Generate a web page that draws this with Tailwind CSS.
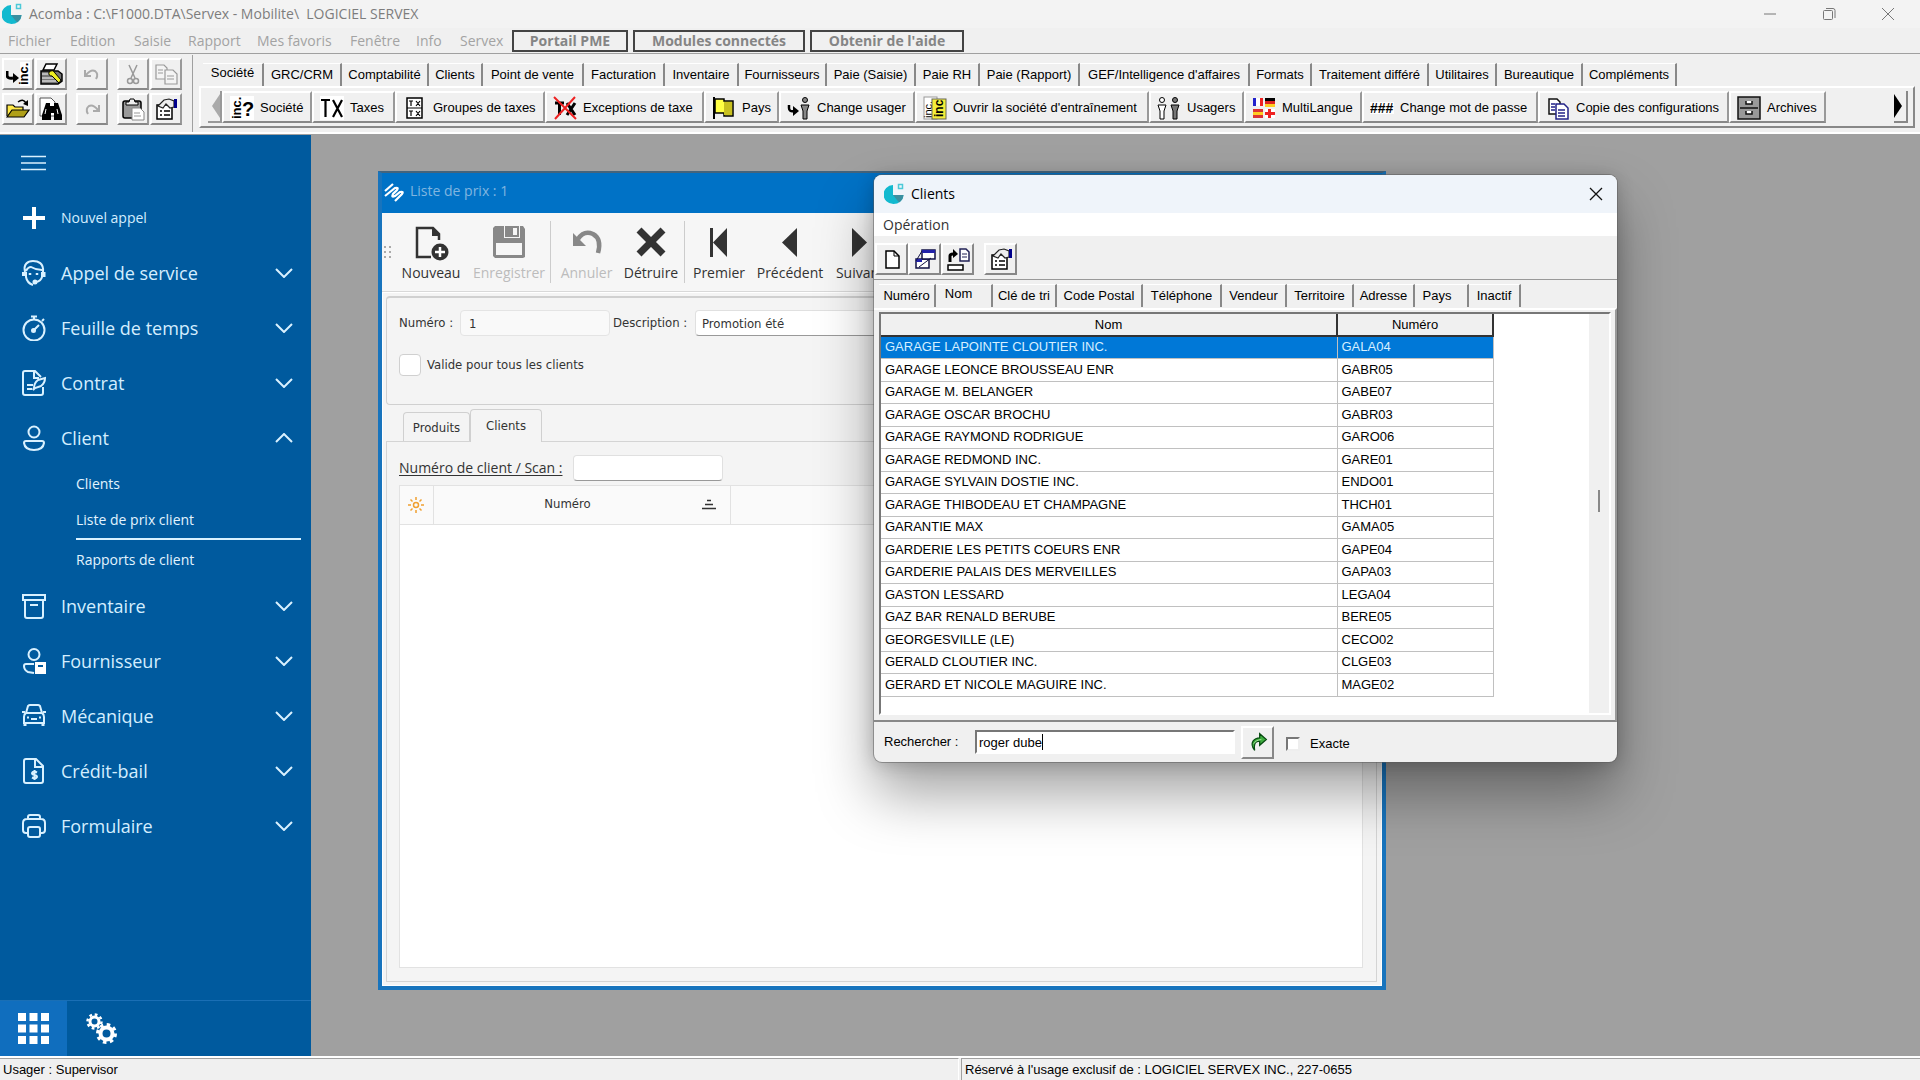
<!DOCTYPE html>
<html lang="fr">
<head>
<meta charset="utf-8">
<title>Acomba</title>
<script src="https://cdn.jsdelivr.net/npm/@tailwindcss/browser@4"></script>
</head>
<body class="flex h-screen flex-col overflow-hidden bg-[#f0f0f0] font-['Liberation_Sans',sans-serif] text-[13px] leading-4 whitespace-nowrap text-black">
<svg class="hidden">
  <symbol id="logo" viewBox="0 0 20 22"><path d="M9 2v10h10.500A10 9.500 0 1 1 9 2z" fill="#12b9cf"/><path d="M9 12h10.500A10 9.500 0 0 1 15 19.500z" fill="#3a8fa0"/><rect x="14.500" y="1.500" width="4" height="4" fill="none" stroke="#4cc9d8" stroke-width="1.500"/></symbol>
  <symbol id="down" viewBox="0 0 18 10"><path d="M1 1l8 8 8-8" fill="none" stroke="#d9f1ff" stroke-width="2"/></symbol>
  <symbol id="props" viewBox="0 0 24 24"><path d="M3 8h15v14H3z" fill="#fff" stroke="#000" stroke-width="1.500"/><path d="M6 14h2M10 14h6M6 18h2M10 18h6" stroke="#000" stroke-width="1.500"/><path d="M4 9l6-6 5-1 5 2v6l-4 1-4-4-3 4z" fill="#eee" stroke="#222" stroke-width="1.200"/><path d="M20 2h3v9h-3z" fill="#00008b"/></symbol>
</svg>

<header>
  <div class="flex h-7 items-center bg-[#f3f3f3] font-['Open_Sans',sans-serif] text-sm text-[#7d7d7d]">
    <svg class="ml-0.5 h-[22px] w-5"><use href="#logo"/></svg>
    <h1 class="ml-[7px] whitespace-pre">Acomba : C:\F1000.DTA\Servex - Mobilite\  LOGICIEL SERVEX</h1>
    <div class="ml-auto flex items-center gap-[45px] pr-[25px]">
      <button aria-label="Réduire"><svg class="h-3.5 w-3.5" viewBox="0 0 14 14"><path d="M1 7h12" stroke="#777"/></svg></button>
      <button aria-label="Restaurer"><svg class="h-3.5 w-3.5" viewBox="0 0 14 14" fill="none" stroke="#777"><rect x="1.500" y="3.500" width="9" height="9" rx="1"/><path d="M4 1.500h7a2 2 0 0 1 2 2V11"/></svg></button>
      <button aria-label="Fermer"><svg class="h-3.5 w-3.5" viewBox="0 0 14 14"><path d="M1 1l12 12M13 1L1 13" stroke="#777"/></svg></button>
    </div>
  </div>
  <nav class="flex h-[26px] items-center border-b border-[#a0a0a0] pl-2 font-['Open_Sans',sans-serif] text-sm text-[#a3a3a3]">
    <button class="w-[62px] text-left">Fichier</button><button class="w-16 text-left">Edition</button><button class="w-[54px] text-left">Saisie</button><button class="w-[69px] text-left">Rapport</button><button class="w-[93px] text-left">Mes favoris</button><button class="w-[66px] text-left">Fenêtre</button><button class="w-11 text-left">Info</button><button class="w-[52px] text-left">Servex</button>
    <div class="flex gap-[5px] font-bold text-[#858585] *:h-[22px] *:border-2 *:border-[#444] *:leading-[18px]">
      <button class="w-[116px]">Portail PME</button><button class="w-[172px]">Modules connectés</button><button class="w-[154px]">Obtenir de l'aide</button>
    </div>
  </nav>
  <div class="flex h-[80px] border-b-2 border-white pt-px">
    <div class="flex gap-[9px] border-r border-[#a0a0a0] pt-[3px] pr-2.5 pl-0.5">
      <div class="grid h-[67px] grid-cols-2 gap-x-px gap-y-0.5 *:flex *:h-8 *:w-8 *:items-center *:justify-center *:border-2 *:border-t-white *:border-r-[#999] *:border-b-[#888] *:border-l-white">
        <button aria-label="Société"><svg class="h-6 w-6" viewBox="0 0 24 24"><rect x="14" width="10" height="24" fill="#fff"/><path d="M1 9v4q0 4 6 3" fill="none" stroke="#000" stroke-width="3"/><path d="M7 11l6 5-6 5z"/><text transform="translate(22 23) rotate(-90)" font-size="13" font-weight="bold">inc.</text></svg></button>
        <button aria-label="Configurer l'impression"><svg class="h-6 w-6" viewBox="0 0 24 24"><path d="M7 2h11l-3 6H4z" fill="#fff" stroke="#000" stroke-width="1.500"/><path d="M2 9h17l4 3v7l-4 3H2z" fill="#777" stroke="#000" stroke-width="1.500"/><path d="M3 12h14M3 16h14M3 19h14" stroke="#fff"/><path d="M10 10q4-3 6 1l6 7-2 3-7-7q-4 0-3-4z" fill="#ee2" stroke="#000"/></svg></button>
        <button aria-label="Ouvrir"><svg class="h-6 w-6" viewBox="0 0 24 24"><path d="M1 19V8h6l2 2h8v4" fill="#ffe94a" stroke="#000" stroke-width="1.200"/><path d="M1 20l5-7h17l-5 7z" fill="#b0a018" stroke="#000" stroke-width="1.200"/><path d="M12 5q5-4 8 1" fill="none" stroke="#000" stroke-width="1.500"/><path d="M22 3v6l-5-2z"/></svg></button>
        <button aria-label="Rechercher"><svg class="h-6 w-6" viewBox="0 0 24 24"><path d="M1 1h11l4 4v14H1z" fill="#fff" stroke="#555"/><path d="M7 6h4v3h4V6h4l4 12v5h-8v-7h-3v7H3v-5z"/><path d="M7 12l-1 5M18 12l1 5" stroke="#fff"/></svg></button>
      </div>
      <div class="grid h-[67px] gap-y-0.5 *:flex *:h-8 *:w-8 *:items-center *:justify-center *:border-2 *:border-t-white *:border-r-[#999] *:border-b-[#888] *:border-l-white">
        <button aria-label="Annuler"><svg class="h-6 w-6" viewBox="0 0 24 24" fill="none" stroke="#aaa" stroke-width="2"><path d="M5 8v6h6M6 13q5-6 9-4 4 3 1 8"/></svg></button>
        <button aria-label="Rétablir"><svg class="h-6 w-6" viewBox="0 0 24 24" fill="none" stroke="#aaa" stroke-width="2"><path d="M19 8v6h-6M18 13q-5-6-9-4-4 3-1 8"/></svg></button>
      </div>
      <div class="grid h-[67px] grid-cols-2 gap-x-px gap-y-0.5 *:flex *:h-8 *:w-8 *:items-center *:justify-center *:border-2 *:border-t-white *:border-r-[#999] *:border-b-[#888] *:border-l-white">
        <button aria-label="Couper"><svg class="h-6 w-6" viewBox="0 0 24 24" fill="none" stroke="#999" stroke-width="1.500"><path d="M8 3l6 13M16 3l-6 13"/><circle cx="9" cy="19" r="2.500"/><circle cx="15" cy="19" r="2.500"/></svg></button>
        <button aria-label="Copier"><svg class="h-6 w-6" viewBox="0 0 24 24" fill="#f4f4f4" stroke="#999" stroke-width="1.200"><path d="M2 3h8l3 3v11H2z"/><path d="M11 8h8l4 4v10H11z"/><path d="M4 8h5M4 11h5M13 14h7M13 17h7"/></svg></button>
        <button aria-label="Coller"><svg class="h-6 w-6" viewBox="0 0 24 24"><rect x="2" y="4" width="18" height="17" rx="2" fill="#999" stroke="#000" stroke-width="1.500"/><path d="M5 8h12V5h-3l-1-3H9L8 5H5z" fill="#eee" stroke="#000"/><path d="M11 11h8l4 4v8H11z" fill="#fff" stroke="#888"/><path d="M13 16h6M13 19h7" stroke="#999"/></svg></button>
        <button aria-label="Propriétés"><svg class="h-6 w-6"><use href="#props"/></svg></button>
      </div>
    </div>
    <div class="min-w-0 flex-1 pr-[5px] pl-1.5">
      <div class="flex h-[31px] items-end pt-1 pl-1 *:h-[23px] *:shrink-0 *:border-r-2 *:border-r-[#888] *:border-t *:border-t-white">
        <button class="w-[61px] pb-1">Société</button><button class="w-[78px]">GRC/CRM</button><button class="w-[87px]">Comptabilité</button><button class="w-[54px]">Clients</button><button class="w-[101px]">Point de vente</button><button class="w-[81px]">Facturation</button><button class="w-[74px]">Inventaire</button><button class="w-[88px]">Fournisseurs</button><button class="w-[89px]">Paie (Saisie)</button><button class="w-16">Paie RH</button><button class="w-[100px]">Paie (Rapport)</button><button class="w-[170px]">GEF/Intelligence d'affaires</button><button class="w-[62px]">Formats</button><button class="w-[117px]">Traitement différé</button><button class="w-[68px]">Utilitaires</button><button class="w-[86px]">Bureautique</button><button class="w-[94px]">Compléments</button>
      </div>
      <div class="flex h-[42px] items-center border-2 border-t-white border-r-[#888] border-b-[#888] border-l-white pl-[7px]">
        <button aria-label="Précédent" class="flex h-8 w-3.5 items-center justify-end border-r-2 border-b-2 border-[#999]"><svg class="h-6 w-2" viewBox="0 0 8 24"><path d="M8 0v24L0 12z" fill="#aaa"/></svg></button>
        <div class="flex *:flex *:h-8 *:shrink-0 *:items-center *:gap-1.5 *:border-2 *:border-t-white *:border-r-[#999] *:border-b-[#888] *:border-l-white *:pt-0.5 *:pl-1.5 [&_svg]:h-6 [&_svg]:w-6 [&_svg]:shrink-0">
          <button class="w-[90px]"><svg viewBox="0 0 24 24"><rect width="24" height="24" fill="#fff"/><text transform="translate(11 23) rotate(-90)" font-size="13" font-weight="bold">inc.</text><text x="12" y="20" font-size="20" font-weight="bold">?</text></svg>Société</button>
          <button class="w-[83px]"><svg viewBox="0 0 24 24"><rect width="24" height="24" fill="#fff"/><path d="M1 4h9M5.500 4v17M13 4l9 17M22 4l-9 17" stroke="#000" stroke-width="2.200"/></svg>Taxes</button>
          <button class="w-[150px]"><svg viewBox="0 0 24 24"><rect x="4" y="2" width="15" height="20" fill="#fff" stroke="#000" stroke-width="1.500"/><path d="M4 12h15M6 5h4M8 5v5M13 5l4 5M17 5l-4 5M6 15h4M8 15v5M13 15l4 5M17 15l-4 5" stroke="#000" stroke-width="1.200"/></svg>Groupes de taxes</button>
          <button class="w-[159px]"><svg viewBox="0 0 24 24"><path d="M2 7h9M6.500 7v12M14 7l8 12M22 7l-8 12" stroke="#000" stroke-width="3"/><path d="M1 1l22 22M22 1L2 23" stroke="#e22" stroke-width="2"/></svg>Exceptions de taxe</button>
          <button class="w-[75px]"><svg viewBox="0 0 24 24"><path d="M2 1v22" stroke="#000" stroke-width="2"/><path d="M3 3h9v2h9v15h-9v-3H3z" fill="#ff4" stroke="#000" stroke-width="1.500"/><path d="M12 6h8v13h-8z" fill="#c8c020"/></svg>Pays</button>
          <button class="w-[136px]"><svg viewBox="0 0 24 24"><path d="M2 9v3q0 4 5 3" fill="none" stroke="#000" stroke-width="2.500"/><path d="M6 10l6 5-6 5z"/><circle cx="18" cy="4" r="2.500" fill="#888" stroke="#000"/><path d="M14 9h8l-2 6v8h-4v-8z" fill="#888" stroke="#000"/></svg>Change usager</button>
          <button class="w-[234px]"><svg viewBox="0 0 24 24"><rect x="1" y="1" width="13" height="22" fill="#fff" stroke="#999"/><text transform="translate(9 22) rotate(-90)" font-size="11">inc.</text><rect x="9" y="3" width="14" height="20" fill="#f5ee3a" stroke="#665"/><text transform="translate(20 21) rotate(-90)" font-size="12" font-weight="bold">inc</text></svg>Ouvrir la société d'entraînement</button>
          <button class="w-[95px]"><svg viewBox="0 0 24 24" stroke="#000"><circle cx="5" cy="4" r="2.500" fill="#fff"/><path d="M1 9h8l-2 6v8H3v-8z" fill="#fff"/><circle cx="18" cy="4" r="2.500" fill="#777"/><path d="M14 9h8l-2 6v8h-4v-8z" fill="#777"/></svg>Usagers</button>
          <button class="w-[118px]"><svg viewBox="0 0 24 24"><path d="M1 2h3v8H1z" fill="#22c"/><path d="M4 2h4v8H4z" fill="#fff"/><path d="M8 2h3v8H8z" fill="#e22"/><path d="M13 2h10v3H13z"/><path d="M13 5h10v3H13z" fill="#d22"/><path d="M13 8h10v3H13z" fill="#fc2"/><path d="M1 13h10v3H1zM1 19h10v3H1z" fill="#d33"/><path d="M1 16h10v3H1z" fill="#fc2"/><path d="M13 13h10v9H13z" fill="#fff"/><path d="M16 13h3v3h4v3h-4v3h-3v-3h-3v-3h3z" fill="#e22"/></svg>MultiLangue</button>
          <button class="w-[176px]"><svg viewBox="0 0 24 24"><rect y="6" width="24" height="12" fill="#fff"/><text x="0" y="17" font-size="14" font-weight="bold">###</text></svg>Change mot de passe</button>
          <button class="w-[191px]"><svg viewBox="0 0 24 24" fill="#fff" stroke="#111" stroke-width="1.500"><path d="M3 3h8l3 3v12H3z"/><path d="M10 8h8l4 4v11H10z" stroke="#228"/><path d="M5 8h4M5 11h4M5 14h4M12 14h7M12 17h7M12 20h7" stroke="#228"/></svg>Copie des configurations</button>
          <button class="w-[97px]"><svg viewBox="0 0 24 24"><rect x="1" y="1" width="22" height="22" fill="#999" stroke="#111" stroke-width="1.500"/><path d="M3 12h18" stroke="#111" stroke-width="1.500"/><path d="M9 5v3h6V5M9 15v3h6v-3" fill="#fff" stroke="#111" stroke-width="1.500"/></svg>Archives</button>
        </div>
        <button aria-label="Suivant" class="mr-[5px] ml-auto flex h-8 w-3.5 items-center border-r-2 border-b-2 border-[#888]"><svg class="h-6 w-2" viewBox="0 0 8 24"><path d="M0 0v24l8-12z"/></svg></button>
      </div>
    </div>
  </div>
</header>

<div class="flex min-h-0 flex-1 border-t border-[#a0a0a0]">
  <aside class="flex w-[311px] flex-col bg-[#005a9e] font-['Open_Sans',sans-serif] text-lg text-[#d4eeff]">
    <button aria-label="Menu" class="flex h-[55px] items-center pl-[21px]"><svg class="h-4 w-[25px]" viewBox="0 0 25 16"><path d="M0 1.500h25M0 8h25M0 14.500h25" stroke="#d9f1ff" stroke-width="1.500"/></svg></button>
    <nav class="flex flex-col [&>button]:flex [&>button]:h-[55px] [&>button]:items-center [&>button]:gap-[15px] [&>button]:pl-[22px] [&>button]:pr-[18px]">
      <button class="text-sm"><svg class="h-6 w-6" viewBox="0 0 24 24"><path d="M1 12h22M12 1v22" stroke="#fff" stroke-width="4"/></svg>Nouvel appel</button>
      <button><svg class="h-[26px] w-6" viewBox="0 0 24 26" fill="none" stroke="#d9f1ff" stroke-width="2"><path d="M3 12C1 4 6 1 11 1s11 2 10 11M4 11q2-4 5-4 5 3 11 3M4 12v5q1 6 7 8M20 12v5q-1 4-6 5"/><path d="M1.500 12v4M22 12v5" stroke-width="3"/><path d="M8 13v2M15 13v2" stroke-width="2.500"/><circle cx="13" cy="22" r="1.500" fill="#d9f1ff"/></svg>Appel de service<svg class="ml-auto h-2.5 w-[18px]"><use href="#down"/></svg></button>
      <button><svg class="h-[26px] w-6" viewBox="0 0 24 26" fill="none" stroke="#d9f1ff" stroke-width="2"><circle cx="12" cy="15" r="10.500"/><path d="M9 1.500h6M12 1v4M20 6l2-2M11 16l6-6"/><circle cx="11.500" cy="15.500" r="1.500" fill="#d9f1ff"/></svg>Feuille de temps<svg class="ml-auto h-2.5 w-[18px]"><use href="#down"/></svg></button>
      <button><svg class="h-[26px] w-6" viewBox="0 0 24 26" fill="none" stroke="#d9f1ff" stroke-width="2"><path d="M19 7l-6-6H3a2 2 0 0 0-2 2v20a2 2 0 0 0 2 2h16a2 2 0 0 0 2-2v-6M12 1v7h5M5 15h6M5 19h5"/><path d="M12 18q0-5 4-8l7-2q0 5-4 8l-6 2-2 2z"/></svg>Contrat<svg class="ml-auto h-2.5 w-[18px]"><use href="#down"/></svg></button>
      <button><svg class="h-[26px] w-6" viewBox="0 0 24 26" fill="none" stroke="#d9f1ff" stroke-width="2"><circle cx="12" cy="7" r="5.500"/><path d="M4 16h16a2 2 0 0 1 2 2q-1 7-10 7T2 18a2 2 0 0 1 2-2z"/></svg>Client<svg class="ml-auto h-2.5 w-[18px] rotate-180"><use href="#down"/></svg></button>
      <div class="flex flex-col pr-2.5 pl-[76px] text-sm text-[#e2f4ff]">
        <a href="#" class="h-9 leading-[38px]">Clients</a>
        <a href="#" class="h-[39px] border-b-2 border-[#d9f1ff] leading-[38px]">Liste de prix client</a>
        <a href="#" class="h-[38px] leading-10">Rapports de client</a>
      </div>
      <button><svg class="h-[26px] w-6" viewBox="0 0 24 26" fill="none" stroke="#d9f1ff" stroke-width="2"><path d="M1 2h22v5H1zM3 7v16a2 2 0 0 0 2 2h14a2 2 0 0 0 2-2V7M8 12h8"/></svg>Inventaire<svg class="ml-auto h-2.5 w-[18px]"><use href="#down"/></svg></button>
      <button><svg class="h-[26px] w-6" viewBox="0 0 24 26" fill="none" stroke="#d9f1ff" stroke-width="2"><circle cx="12" cy="6.500" r="5.500"/><path d="M12 16H4a2 2 0 0 0-2 2q0 4 4 6l6 1"/><path d="M13 14h11v12H13z" fill="#fff" stroke="none"/><path d="M16 18h5" stroke="#005a9e"/></svg>Fournisseur<svg class="ml-auto h-2.5 w-[18px]"><use href="#down"/></svg></button>
      <button><svg class="h-[26px] w-6" viewBox="0 0 24 26" fill="none" stroke="#d9f1ff" stroke-width="2"><path d="M4 10l2-7q1-1 2-1h8q1 0 2 1l2 7M0 9h3M21 9h3M4 10h16q2 1 2 4v6H2v-6q0-3 2-4zM9 16h6"/><path d="M3 20v3M21 20v3" stroke-width="3"/><path d="M6 13.500v2M18 13.500v2"/></svg>Mécanique<svg class="ml-auto h-2.5 w-[18px]"><use href="#down"/></svg></button>
      <button><svg class="h-[26px] w-6" viewBox="0 0 24 26" fill="none" stroke="#d9f1ff" stroke-width="2"><path d="M14 1H4a2 2 0 0 0-2 2v20a2 2 0 0 0 2 2h15a2 2 0 0 0 2-2V8zM13 1v8h8"/><path d="M15 14.500q-4-2-5 .5 0 1.500 2.500 2t2.500 2q-1 2.500-5 .5M12.500 12v10"/></svg>Crédit-bail<svg class="ml-auto h-2.5 w-[18px]"><use href="#down"/></svg></button>
      <button><svg class="h-[26px] w-6" viewBox="0 0 24 26" fill="none" stroke="#d9f1ff" stroke-width="2"><path d="M6 6V4q0-2 2-2h8q2 0 2 2v2M6 20H4q-3 0-3-3v-7q0-4 4-4h14q4 0 4 4v7q0 3-3 3h-2"/><rect x="6" y="14" width="12" height="10" rx="2"/></svg>Formulaire<svg class="ml-auto h-2.5 w-[18px]"><use href="#down"/></svg></button>
    </nav>
    <div class="mt-auto flex h-14 border-t border-[#1a6fb5]">
      <button aria-label="Modules" class="flex w-[67px] items-center justify-center bg-[#106ebe]"><svg class="h-[31px] w-[31px]" viewBox="0 0 31 31" fill="#fff"><path d="M0 0h8v8H0zM11.500 0h8v8h-8zM23 0h8v8h-8zM0 11.500h8v8H0zM11.500 11.500h8v8h-8zM23 11.500h8v8h-8zM0 23h8v8H0zM11.500 23h8v8h-8zM23 23h8v8h-8z"/></svg></button>
      <button aria-label="Configuration" class="flex w-[68px] items-center justify-center"><svg class="h-[31px] w-[31px]" viewBox="0 0 31 31" fill="none" stroke="#fff"><circle cx="8.500" cy="8.500" r="4.500" stroke-width="3"/><circle cx="8.500" cy="8.500" r="7" stroke-width="2.500" stroke-dasharray="2.750 2.750"/><circle cx="20.500" cy="20.500" r="6" stroke-width="4"/><circle cx="20.500" cy="20.500" r="9" stroke-width="3" stroke-dasharray="3.530 3.530"/></svg></button>
    </div>
  </aside>

  <main class="relative min-w-0 flex-1 overflow-hidden bg-[#a0a0a0]">
    <!-- Fenêtre de la liste de prix -->
    <section class="absolute top-9 left-[67px] flex h-[819px] w-[1008px] flex-col border-2 border-r-4 border-b-4 border-l-4 border-[#1874bd] border-t-[#44647c] bg-[#f4f4f4] font-['Open_Sans',sans-serif] text-sm text-[#333]">
      <div class="flex h-10 shrink-0 items-center bg-[#0072c6] pb-1 pl-0.5 text-[#80b6e0]">
        <svg class="mt-0.5 h-5 w-5" viewBox="0 0 20 20" fill="none" stroke="#fff" stroke-width="2.200"><path d="M1 9l8-7M1 14l10-8q4-1 2 2l-4 4q-2 4 2 2l5-4q4-1 2 2l-7 7"/></svg>
        <h2 class="ml-1.5">Liste de prix : 1</h2>
      </div>
      <div class="flex h-[79px] shrink-0 items-center border-b border-[#d8d8d8] bg-[#f6f6f6] pl-0.5 [&>button]:flex [&>button]:h-[62px] [&>button]:flex-col [&>button]:items-center [&>button]:justify-between [&>button]:pt-1 [&_svg]:h-9 [&_svg]:w-9">
        <span class="grid grid-cols-2 gap-[3px] pr-px *:h-0.5 *:w-0.5 *:bg-[#aaa]"><i></i><i></i><i></i><i></i><i></i><i></i></span>
        <button class="w-[78px]"><svg viewBox="0 0 36 36"><path d="M26 15V9l-6-6H4v29h14" fill="none" stroke="#333" stroke-width="2.500"/><path d="M19 2v9h8z" fill="#333"/><circle cx="27" cy="27" r="8.500" fill="#333"/><path d="M22 27h10M27 22v10" stroke="#fff" stroke-width="2.500"/></svg>Nouveau</button>
        <button disabled class="w-[78px] text-[#bcbcbc]"><svg viewBox="0 0 36 36"><path d="M4 1h28l2 3v28l-2 1H4l-2-2V3z" fill="#888"/><path d="M13 1h16v12H13z" fill="#f6f6f6"/><path d="M14 1h14v11H14z" fill="#888"/><path d="M22 3h4v7h-4z" fill="#f6f6f6"/><path d="M5 18h26v12H5z" fill="#f6f6f6"/></svg>Enregistrer</button>
        <i class="mx-0.5 h-[62px] w-px bg-[#ccc]"></i>
        <button disabled class="w-[67px] text-[#bcbcbc]"><svg viewBox="0 0 36 36"><path d="M9 14q6-9 15-5 9 5 5 19" fill="none" stroke="#888" stroke-width="4.500"/><path d="M4 8v13h13z" fill="#888"/></svg>Annuler</button>
        <button class="w-[62px]"><svg viewBox="0 0 36 36"><path d="M6 5l24 24M30 5L6 29" stroke="#333" stroke-width="7"/></svg>Détruire</button>
        <i class="mx-0.5 h-[62px] w-px bg-[#ccc]"></i>
        <button class="w-[64px]"><svg viewBox="0 0 36 36"><path d="M9 3h3v29H9zM26 3v29L12 17.500z" fill="#333"/></svg>Premier</button>
        <button class="w-[78px]"><svg viewBox="0 0 36 36"><path d="M25 3v29L10 17.500z" fill="#333"/></svg>Précédent</button>
        <button class="w-[62px]"><svg viewBox="0 0 36 36"><path d="M10 3v29l15-14.500z" fill="#333"/></svg>Suivant</button>
      </div>
      <div class="flex min-h-0 flex-1 flex-col border border-white p-[3px] pr-1 font-['DejaVu_Sans_Condensed','Open_Sans',sans-serif] text-[13px]">
        <div class="flex h-[109px] shrink-0 flex-col gap-[18px] rounded border border-t-2 border-[#d0d0d0] px-3 pt-3">
          <div class="flex items-center">
            <label for="num" class="w-[61px]">Numéro :</label>
            <input id="num" value="1" readonly class="h-[26px] w-[150px] rounded border border-[#e4e4e4] bg-[#f9f9f9] px-2">
            <label for="desc" class="ml-[3px] w-[82px]">Description :</label>
            <input id="desc" value="Promotion été" class="h-[26px] flex-1 rounded border border-[#e0e0e0] border-b-[#999] bg-white px-1.5">
          </div>
          <label class="flex items-center gap-1.5"><input type="checkbox" class="h-[22px] w-[22px] appearance-none rounded border border-[#d0d0d0] bg-white">Valide pour tous les clients</label>
        </div>
        <div class="flex h-9 shrink-0 items-end pl-[17px]">
          <button class="-mb-px h-[30px] w-[67px] rounded-t border border-b-0 border-[#d0d0d0] pt-0.5">Produits</button>
          <button class="relative -mb-px h-[33px] w-[72px] rounded-t border border-b-0 border-[#d0d0d0] bg-[#f4f4f4]">Clients</button>
        </div>
        <div class="flex min-h-0 flex-1 flex-col border border-[#d4d4d4] p-[13px] pl-3">
          <div class="flex h-[30px] shrink-0 items-start gap-[7px]">
            <label for="scan" class="w-[167px] font-['Open_Sans',sans-serif] text-sm leading-[26px] underline underline-offset-2">Numéro de client / Scan :</label>
            <input id="scan" class="h-[26px] w-[150px] rounded border border-[#e0e0e0] border-b-[#999] bg-white px-2">
          </div>
          <div class="min-h-0 flex-1 border border-[#e2e2e2] bg-white">
            <table class="w-full table-fixed border-collapse bg-[#fafafa]">
              <thead><tr class="h-[38px] border-b border-[#e2e2e2]">
                <th class="w-[33px] border-r border-[#e2e2e2]"><svg class="mx-auto h-4 w-4" viewBox="0 0 16 16" fill="none" stroke="#f0a030" stroke-width="1.500"><circle cx="8" cy="8" r="2.500"/><path d="M8 0v3M8 13v3M0 8h3M13 8h3M2.500 2.500l2 2M11.500 11.500l2 2M13.500 2.500l-2 2M4.500 11.500l-2 2"/></svg></th>
                <th class="w-[297px] border-r border-[#e2e2e2] font-normal"><div class="flex items-center pr-3.5"><span class="flex-1">Numéro</span><svg class="h-3 w-3.5" viewBox="0 0 14 12"><path d="M5 1.500h4M3 5.500h8M0 9.500h14" stroke="#333" stroke-width="1.500"/></svg></div></th>
                <th></th>
              </tr></thead>
            </table>
          </div>
        </div>
      </div>
    </section>

    <!-- Fenêtre de recherche des clients -->
    <section class="absolute top-10 left-[563px] flex h-[587px] w-[743px] flex-col overflow-hidden rounded-lg bg-[#f0f0f0] shadow-[0_0_0_1px_rgba(90,90,90,0.5),0_32px_56px_rgba(0,0,0,0.36),0_2px_18px_rgba(0,0,0,0.2)]">
      <div class="flex h-[38px] shrink-0 items-center bg-[#eff4fa] pr-3.5 pl-2.5 font-['Open_Sans',sans-serif] text-sm">
        <svg class="h-[22px] w-5"><use href="#logo"/></svg>
        <h2 class="ml-[7px]">Clients</h2>
        <button aria-label="Fermer" class="ml-auto"><svg class="h-3.5 w-3.5" viewBox="0 0 14 14"><path d="M1 1l12 12M13 1L1 13" stroke="#111" stroke-width="1.300"/></svg></button>
      </div>
      <div class="flex h-[25px] shrink-0 items-center border-b-2 border-[#f0f0f0] bg-white pl-[9px] font-['Open_Sans',sans-serif] text-sm text-[#333]"><button>Opération</button></div>
      <div class="flex h-[42px] shrink-0 items-center border-b border-[#999] pl-px *:flex *:h-8 *:w-[33px] *:items-center *:justify-center *:border-2 *:border-t-white *:border-r-[#888] *:border-b-[#888] *:border-l-white [&_svg]:h-6 [&_svg]:w-6">
        <button aria-label="Nouveau"><svg viewBox="0 0 24 24"><path d="M6 4h8l5 5v12H6z" fill="#fff" stroke="#000" stroke-width="1.500"/><path d="M14 4v5h5" fill="none" stroke="#000"/></svg></button>
        <button aria-label="Fenêtres"><svg viewBox="0 0 24 24"><path d="M3 12h13v9H3z" fill="#fff" stroke="#114" stroke-width="1.500"/><path d="M9 3h13v9H9z" fill="#fff" stroke="#114" stroke-width="1.500"/><path d="M9 3h13v3H9zM3 12h6v3H3z" fill="#22a"/><path d="M3 14l6-10M6 20L18 11" stroke="#114"/></svg></button>
        <button aria-label="Importer"><svg viewBox="0 0 24 24"><path d="M14 2h6l3 3v9h-9z" fill="#fff" stroke="#225" stroke-width="1.500"/><path d="M16 7h5M16 10h5" stroke="#225"/><path d="M4 15V9q0-2 3-2" fill="none" stroke="#000" stroke-width="3"/><path d="M7 2v9l5-4z"/><path d="M2 18h15v5H2z" fill="#fff" stroke="#000" stroke-width="1.500"/></svg></button>
        <button aria-label="Propriétés" class="ml-2.5"><svg><use href="#props"/></svg></button>
      </div>
      <div class="flex h-7 shrink-0 items-end pb-px pl-[5px] *:h-[23px] *:border-t *:border-r-2 *:border-t-white *:border-r-[#888]">
        <button class="w-[57px] border-r-0 border-r-transparent">Numéro</button><button class="w-[57px] pr-2.5 pb-1">Nom</button><button class="w-16">Clé de tri</button><button class="w-[86px]">Code Postal</button><button class="w-[79px]">Téléphone</button><button class="w-[65px]">Vendeur</button><button class="w-[67px]">Territoire</button><button class="w-[61px]">Adresse</button><button class="w-[54px] pr-2">Pays</button><button class="w-[52px]">Inactif</button>
      </div>
      <div class="flex min-h-0 flex-1 border-t-2 border-r-2 border-b-2 border-t-white border-r-[#999] border-b-[#888] pt-0.5 pr-1 pb-[5px] pl-[5px]">
        <div class="flex min-w-0 flex-1 border-2 border-t-[#777] border-r-white border-b-white border-l-[#777] bg-white">
          <div class="flex-1">
            <table class="table-fixed border-collapse [&_td]:border-r [&_td]:border-b [&_td]:border-[#c0c0c0] [&_td]:p-0 [&_td]:pl-1">
              <colgroup><col class="w-[456px]"><col class="w-[156px]"></colgroup>
              <thead><tr class="h-[22px] bg-[#f0f0f0] *:border-r-2 *:border-b-2 *:border-[#333] *:p-0 *:font-normal"><th>Nom</th><th>Numéro</th></tr></thead>
              <tbody class="[&>tr:nth-child(even)]:h-[23px] [&>tr:nth-child(odd)]:h-[22px]">
                <tr class="bg-[#0078d7] text-[#d6efff]"><td>GARAGE LAPOINTE CLOUTIER INC.</td><td>GALA04</td></tr>
                <tr><td>GARAGE LEONCE BROUSSEAU ENR</td><td>GABR05</td></tr>
                <tr><td>GARAGE M. BELANGER</td><td>GABE07</td></tr>
                <tr><td>GARAGE OSCAR BROCHU</td><td>GABR03</td></tr>
                <tr><td>GARAGE RAYMOND RODRIGUE</td><td>GARO06</td></tr>
                <tr><td>GARAGE REDMOND INC.</td><td>GARE01</td></tr>
                <tr><td>GARAGE SYLVAIN DOSTIE INC.</td><td>ENDO01</td></tr>
                <tr><td>GARAGE THIBODEAU ET CHAMPAGNE</td><td>THCH01</td></tr>
                <tr><td>GARANTIE MAX</td><td>GAMA05</td></tr>
                <tr><td>GARDERIE LES PETITS COEURS ENR</td><td>GAPE04</td></tr>
                <tr><td>GARDERIE PALAIS DES MERVEILLES</td><td>GAPA03</td></tr>
                <tr><td>GASTON LESSARD</td><td>LEGA04</td></tr>
                <tr><td>GAZ BAR RENALD BERUBE</td><td>BERE05</td></tr>
                <tr><td>GEORGESVILLE (LE)</td><td>CECO02</td></tr>
                <tr><td>GERALD CLOUTIER INC.</td><td>CLGE03</td></tr>
                <tr><td>GERARD ET NICOLE MAGUIRE INC.</td><td>MAGE02</td></tr>
              </tbody>
            </table>
          </div>
          <div class="flex w-5 flex-col items-center bg-[#f0f0f0] pt-[176px]"><i class="h-[22px] w-0.5 bg-[#888]"></i></div>
        </div>
      </div>
      <div class="flex h-10 shrink-0 items-center pl-2.5">
        <label for="q" class="w-[91px]">Rechercher :</label>
        <div class="relative">
          <input id="q" value="roger dube" class="block h-6 w-[260px] border-2 border-t-[#777] border-r-white border-b-white border-l-[#777] bg-white px-0.5">
          <i class="absolute top-1 left-[67px] h-4 w-px bg-black"></i>
        </div>
        <button aria-label="Lancer la recherche" class="ml-1.5 flex h-[33px] w-[33px] items-center justify-center border-2 border-t-white border-r-[#888] border-b-[#888] border-l-white"><svg class="h-[22px] w-5" viewBox="0 0 24 24"><path d="M8 22q-5-6-2-11 3-4 8-4V2l8 7-8 7v-5q-5 0-6 4-1 3 0 7z" fill="#3fae3f" stroke="#064a10" stroke-width="1.500"/><path d="M7 14q2-4 9-5" stroke="#b8f0a8" fill="none"/></svg></button>
        <label class="ml-3 flex items-center gap-2.5 pt-1"><input type="checkbox" class="h-3.5 w-3.5 appearance-none border-2 border-t-[#777] border-r-[#eee] border-b-[#eee] border-l-[#777] bg-white">Exacte</label>
      </div>
    </section>
  </main>
</div>

<footer class="grid h-6 shrink-0 grid-cols-2 gap-0.5 border-t-2 border-white">
  <div class="border-t border-r border-t-[#a0a0a0] border-r-white pl-[3px] leading-[22px]">Usager : Supervisor</div>
  <div class="border-t border-l border-[#a0a0a0] pl-[3px] leading-[22px]">Réservé à l'usage exclusif de : LOGICIEL SERVEX INC., 227-0655</div>
</footer>
</body>
</html>
